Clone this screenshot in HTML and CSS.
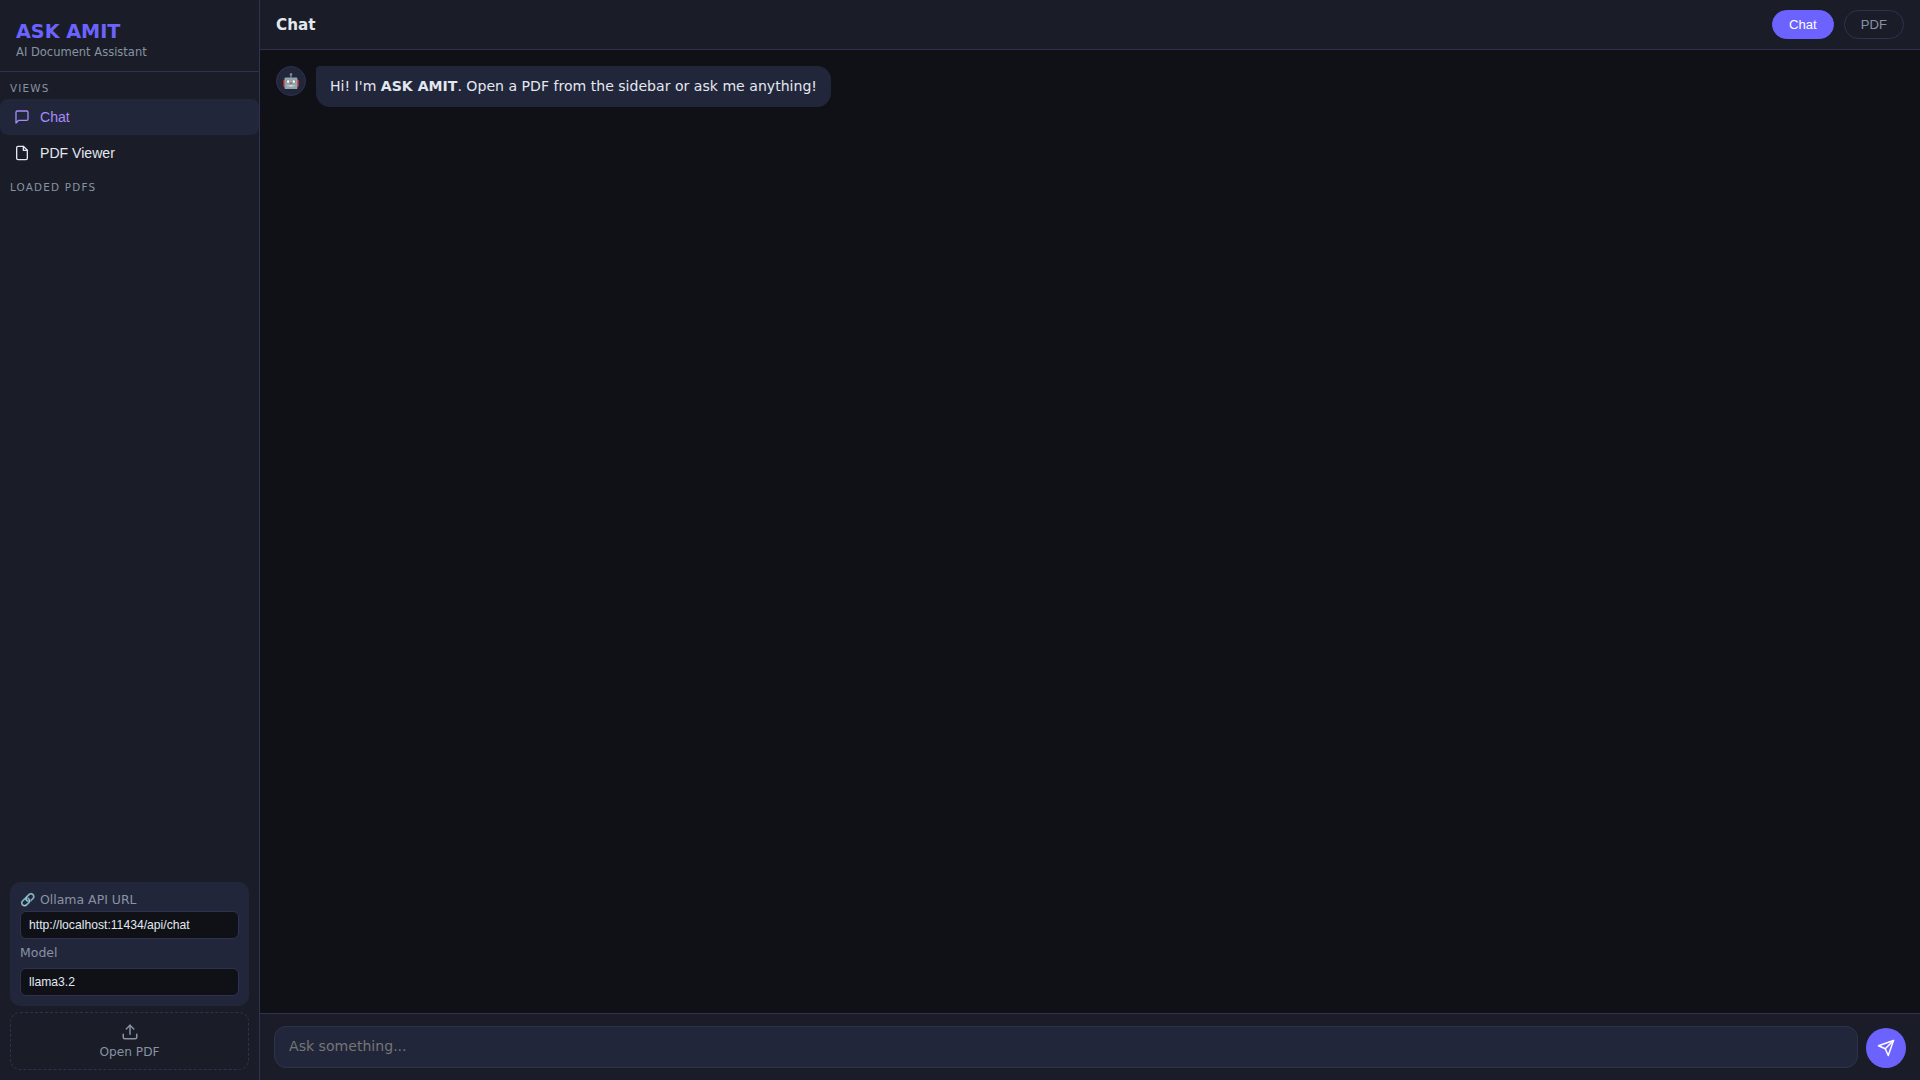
FILE: index.html
```html
<!DOCTYPE html>
<html lang="en">
<head>
<meta charset="utf-8">
<title>ASK AMIT</title>
<link rel="stylesheet" href="styles.css">
</head>
<body>
<div class="app">
  <aside class="sidebar">
    <div class="brand">
      <div class="brand-name">ASK AMIT</div>
      <div class="brand-sub">AI Document Assistant</div>
    </div>
    <div class="section-label first">VIEWS</div>
    <nav class="nav">
      <a class="nav-item active">
        <svg class="nav-icon" viewBox="0 0 24 24" fill="none" stroke="currentColor" stroke-width="2" stroke-linecap="round" stroke-linejoin="round"><path d="M21 15a2 2 0 0 1-2 2H7l-4 4V5a2 2 0 0 1 2-2h14a2 2 0 0 1 2 2z"/></svg>
        <span>Chat</span>
      </a>
      <a class="nav-item">
        <svg class="nav-icon" viewBox="0 0 24 24" fill="none" stroke="currentColor" stroke-width="2" stroke-linecap="round" stroke-linejoin="round"><path d="M14 2H6a2 2 0 0 0-2 2v16a2 2 0 0 0 2 2h12a2 2 0 0 0 2-2V8z"/><path d="M14 2v6h6"/></svg>
        <span>PDF Viewer</span>
      </a>
    </nav>
    <div class="section-label">LOADED PDFS</div>
    <div class="pdf-list"></div>
    <div class="config">
      <label class="config-label">🔗 Ollama API URL</label>
      <input class="config-input" value="http://localhost:11434/api/chat">
      <label class="config-label model">Model</label>
      <input class="config-input" value="llama3.2">
    </div>
    <div class="open-pdf">
      <svg class="open-icon" viewBox="0 0 24 24" fill="none" stroke="currentColor" stroke-width="2" stroke-linecap="round" stroke-linejoin="round"><path d="M21 15v4a2 2 0 0 1-2 2H5a2 2 0 0 1-2-2v-4"/><path d="M17 8l-5-5-5 5"/><path d="M12 3v12"/></svg>
      <span>Open PDF</span>
    </div>
  </aside>
  <main class="main">
    <header class="topbar">
      <div class="title">Chat</div>
      <div class="tabs">
        <button class="tab on">Chat</button>
        <button class="tab">PDF</button>
      </div>
    </header>
    <section class="messages">
      <div class="avatar">🤖</div>
      <div class="bubble">Hi! I'm <strong>ASK AMIT</strong>. Open a PDF from the sidebar or ask me anything!</div>
    </section>
    <footer class="composer">
      <input class="ask" placeholder="Ask something...">
      <button class="send" aria-label="Send">
        <svg viewBox="0 0 24 24" fill="none" stroke="currentColor" stroke-width="2" stroke-linecap="round" stroke-linejoin="round"><path d="M22 2L11 13"/><path d="M22 2l-7 20-4-9-9-4z"/></svg>
      </button>
    </footer>
  </main>
</div>
</body>
</html>
```
FILE: styles.css
```css
* { box-sizing: border-box; }
html, body { margin: 0; height: 100%; }
body { background: #0f1117; color: #e2e8f0; font-family: "Liberation Sans", Arial, sans-serif; overflow: hidden; }
.app { display: flex; height: 1080px; }

.sidebar { width: 260px; flex: none; background: #1a1d27; border-right: 1px solid #2e3250; display: flex; flex-direction: column; }
.brand { padding: 21px 16px 12px; border-bottom: 1px solid #2e3250; height: 72px; }
.brand-name { font: 700 19.2px/22px "DejaVu Sans", sans-serif; color: #6c63ff; }
.brand-sub { font: 11.52px/14px "DejaVu Sans", sans-serif; color: #8892a4; margin-top: 2px; }
.section-label { font: 10.4px/14px "DejaVu Sans", sans-serif; letter-spacing: 1.2px; color: #8892a4; padding: 9px 10px 4px; }
.section-label.first { padding-top: 9px; }
.nav { display: flex; flex-direction: column; }
.nav-item { height: 36px; display: flex; align-items: center; gap: 10px; padding: 0 14px; font-size: 14.08px; color: #e2e8f0; border-radius: 8px; }
.nav-item.active { background: #22263a; color: #a78bfa; }
.nav-icon { width: 16px; height: 16px; flex: none; }
.pdf-list { flex: 1; }

.config { margin: 0 10px; background: #22263a; border-radius: 10px; padding: 10px; display: flex; flex-direction: column; height: 124px; }
.config-label { font: 12.48px/16px "DejaVu Sans", sans-serif; color: #8892a4; margin-top: 0; height: 19px; }
.config-label.model { margin-top: 6px; height: 24px; }
.config-input { height: 28px; background: #0f1117; border: 1px solid #2e3250; border-radius: 6px; padding: 0 8px; color: #e2e8f0; font: 12.16px "Liberation Sans", Arial, sans-serif; outline: none; width: 100%; flex: none; }
.open-pdf { margin: 6px 10px 10px; height: 58px; border: 1px dashed #2e3250; border-radius: 10px; display: flex; flex-direction: column; align-items: center; justify-content: center; gap: 3px; color: #8892a4; font: 12.16px/16px "DejaVu Sans", sans-serif; }
.open-icon { width: 18px; height: 18px; }

.main { flex: 1; display: flex; flex-direction: column; min-width: 0; }
.topbar { height: 50px; background: #1a1d27; border-bottom: 1px solid #2e3250; display: flex; align-items: center; justify-content: space-between; padding: 0 16px; flex: none; }
.title { font: 700 15.2px/20px "DejaVu Sans", sans-serif; color: #e2e8f0; }
.tabs { display: flex; gap: 10px; }
.tab { height: 29px; padding: 0 16px; border-radius: 15px; border: 1px solid #2e3250; background: transparent; color: #8892a4; font: 13.12px "Liberation Sans", Arial, sans-serif; }
.tab.on { background: #6c63ff; border-color: #6c63ff; color: #fff; }
.messages { flex: 1; padding: 16px; display: flex; align-items: flex-start; gap: 10px; }
.avatar { width: 30px; height: 30px; border-radius: 50%; background: #22263a; border: 1px solid #2e3250; display: flex; align-items: center; justify-content: center; font-size: 14.4px; flex: none; }
.bubble { background: #22263a; border-radius: 4px 14px 14px 14px; padding: 10px 14px; font: 14.08px/21px "DejaVu Sans", sans-serif; color: #e2e8f0; }
.composer { height: 67px; background: #1a1d27; border-top: 1px solid #2e3250; display: flex; align-items: flex-end; gap: 8px; padding: 0 14px 12px; flex: none; }
.ask { flex: 1; height: 42px; background: #22263a; border: 1px solid #2e3250; border-radius: 12px; padding: 0 14px 2px; color: #e2e8f0; font: 14.08px "DejaVu Sans", sans-serif; outline: none; }
.ask::placeholder { color: #757575; opacity: 1; }
.send { width: 40px; height: 40px; border-radius: 50%; background: #6c63ff; border: 0; padding: 0; color: #fff; display: flex; align-items: center; justify-content: center; flex: none; }
.send svg { width: 18px; height: 18px; }
```
